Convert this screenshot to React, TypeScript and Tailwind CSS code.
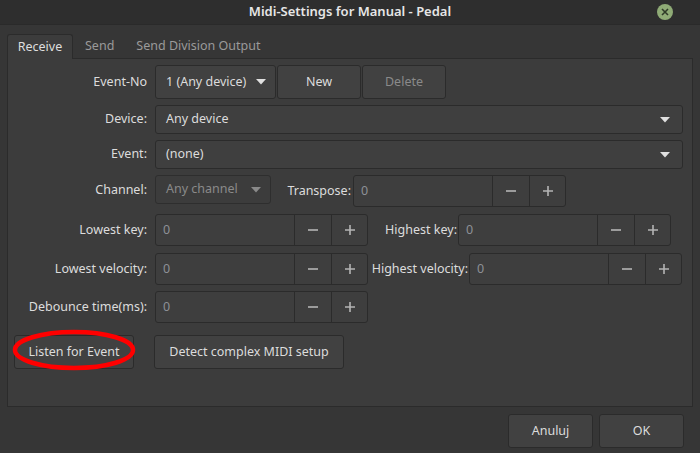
import React from "react";

const font = { fontFamily: '"Noto Sans", "Open Sans", sans-serif' };

const Arrow = ({ color = "#e0e0e0" }: { color?: string }) => (
  <svg width="10" height="6" viewBox="0 0 10 6">
    <path d="M0 0 L10 0 L5 5.5 Z" fill={color} />
  </svg>
);

const Minus = () => (
  <svg width="12" height="12" viewBox="0 0 12 12">
    <path d="M1 6 H11" stroke="#b4b4b4" strokeWidth="1.6" />
  </svg>
);

const Plus = () => (
  <svg width="12" height="12" viewBox="0 0 12 12">
    <path d="M1 6 H11 M6 1 V11" stroke="#b4b4b4" strokeWidth="1.6" />
  </svg>
);

const Spin = () => (
  <div className="flex h-[32px] w-[213px] shrink-0 rounded-[3px] border border-[#2b2b2b] bg-[#3e3e3e]">
    <div className="flex w-[139px] items-center pl-[7px] text-[12.5px] text-[#8d9096]">0</div>
    <div className="flex w-[37px] items-center justify-center border-l border-[#2b2b2b]">
      <Minus />
    </div>
    <div className="flex w-[36px] items-center justify-center border-l border-[#2b2b2b]">
      <Plus />
    </div>
  </div>
);

const Label = ({ children, w }: { children: React.ReactNode; w: string }) => (
  <div className={`${w} shrink-0 whitespace-nowrap pr-[8px] text-right text-[12.5px] text-[#dcdcdc]`}>{children}</div>
);

const Btn = ({ children, className = "" }: { children: React.ReactNode; className?: string }) => (
  <div
    className={`flex h-[34px] shrink-0 items-center justify-center whitespace-nowrap rounded-[3px] border border-[#2b2b2b] bg-[#414141] text-[12.5px] text-[#dcdcdc] ${className}`}
  >
    {children}
  </div>
);

export default function App() {
  return (
    <div className="flex h-[453px] w-[700px] flex-col bg-[#363636]" style={font}>
      {/* title bar */}
      <div className="relative flex h-[25px] shrink-0 items-center justify-center border-b border-[#2a2a2a] bg-[#2e2e2e]">
        <span className="text-[13px] font-semibold text-[#e6e6e6]">Midi-Settings for Manual - Pedal</span>
        <div className="absolute right-[27px] top-[4px] flex h-[16px] w-[16px] items-center justify-center rounded-full bg-[#8fab76]">
          <svg width="8" height="8" viewBox="0 0 8 8">
            <path d="M1 1 L7 7 M7 1 L1 7" stroke="#2f3a28" strokeWidth="1.6" />
          </svg>
        </div>
      </div>

      {/* tabs */}
      <div className="ml-[7px] mt-[8px] flex h-[25px] items-end">
        <div className="relative z-10 -mb-px flex h-[25px] w-[66px] items-center justify-center rounded-t-[3px] border border-b-0 border-[#2b2b2b] bg-[#3c3c3c] text-[12.5px] text-[#dedede]">
          Receive
        </div>
        <div className="ml-[12px] flex h-[24px] items-center text-[12.5px] text-[#9a9a9a]">Send</div>
        <div className="ml-[22px] flex h-[24px] items-center text-[12.5px] text-[#9a9a9a]">Send Division Output</div>
      </div>

      {/* panel */}
      <div className="ml-[7px] flex h-[349px] w-[686px] flex-col border border-[#2b2b2b] bg-[#3c3c3c] pt-[6px]">
        <div className="flex items-center">
          <Label w="w-[147px]">Event-No</Label>
          <Btn className="w-[121px] justify-start gap-[10px] pl-[10px]">
            <span>1 (Any device)</span>
            <Arrow />
          </Btn>
          <Btn className="ml-[1px] w-[84px]">New</Btn>
          <Btn className="ml-[1px] w-[84px] !text-[#8a8a8a]">Delete</Btn>
        </div>

        <div className="mt-[6px] flex items-center">
          <Label w="w-[147px]">Device:</Label>
          <div className="flex h-[29px] w-[528px] items-center justify-between rounded-[3px] border border-[#2b2b2b] bg-[#3f3f3f] pl-[10px] pr-[12px] text-[12.5px] text-[#dcdcdc]">
            <span>Any device</span>
            <Arrow />
          </div>
        </div>

        <div className="mt-[6px] flex items-center">
          <Label w="w-[147px]">Event:</Label>
          <div className="flex h-[29px] w-[528px] items-center justify-between rounded-[3px] border border-[#2b2b2b] bg-[#3f3f3f] pl-[10px] pr-[12px] text-[12.5px] text-[#dcdcdc]">
            <span>(none)</span>
            <Arrow />
          </div>
        </div>

        <div className="mt-[6px] flex items-start">
          <Label w="w-[147px] pt-[6px]">Channel:</Label>
          <div className="flex h-[29px] w-[116px] shrink-0 items-center justify-between rounded-[3px] border border-[#2e2e2e] bg-[#3c3c3c] pl-[10px] pr-[9px] text-[12.5px] text-[#8a8a8a]">
            <span>Any channel</span>
            <Arrow color="#8a8a8a" />
          </div>
          <Label w="w-[82px] pt-[7px] !pr-[2px]">Transpose:</Label>
          <Spin />
        </div>

        <div className="mt-[7px] flex items-center">
          <Label w="w-[147px]">Lowest key:</Label>
          <Spin />
          <Label w="w-[90px] !pr-[1px]">Highest key:</Label>
          <Spin />
        </div>

        <div className="mt-[7px] flex items-center">
          <Label w="w-[147px]">Lowest velocity:</Label>
          <Spin />
          <Label w="w-[101px] !pr-[1px]">Highest velocity:</Label>
          <Spin />
        </div>

        <div className="mt-[6px] flex items-center">
          <Label w="w-[147px]">Debounce time(ms):</Label>
          <Spin />
        </div>

        <div className="mt-[12px] flex items-center pl-[6px]">
          <div className="relative">
            <Btn className="w-[120px]">Listen for Event</Btn>
            <svg className="pointer-events-none absolute -left-[4px] -top-[6px]" width="130" height="46" viewBox="0 0 130 46">
              <ellipse cx="64" cy="21" rx="59" ry="18" fill="none" stroke="#ff0000" strokeWidth="4.5" />
            </svg>
          </div>
          <Btn className="ml-[20px] w-[190px]">Detect complex MIDI setup</Btn>
        </div>
      </div>

      {/* footer */}
      <div className="mt-[7px] flex justify-end gap-[6px] pr-[16px]">
        <Btn className="w-[85px]">Anuluj</Btn>
        <Btn className="w-[85px]">OK</Btn>
      </div>
    </div>
  );
}
